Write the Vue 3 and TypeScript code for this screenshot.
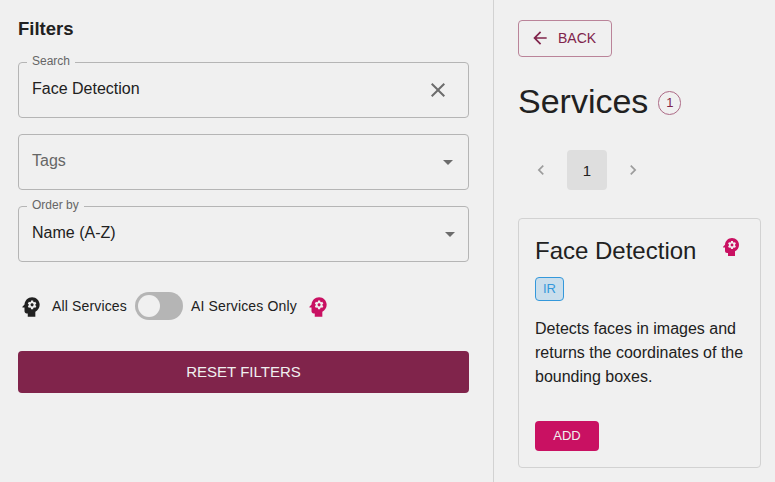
<script setup lang="ts">
import { ref, computed } from 'vue'

interface Service {
  name: string
  tag: string
  description: string
  ai: boolean
}

const search = ref('Face Detection')
const aiOnly = ref(false)
const services: Service[] = [
  {
    name: 'Face Detection',
    tag: 'IR',
    description: 'Detects faces in images and returns the coordinates of the bounding boxes.',
    ai: true,
  },
]
const shown = computed(() =>
  services.filter((s) => s.name.includes(search.value) && (!aiOnly.value || s.ai)),
)

function reset(): void {
  search.value = ''
  aiOnly.value = false
}
</script>

<template>
  <svg class="defs" aria-hidden="true">
    <symbol id="psychology" viewBox="0 0 24 24">
      <path d="M13 8.57c-.79 0-1.43.64-1.43 1.43s.64 1.43 1.43 1.43 1.43-.64 1.43-1.43-.64-1.43-1.43-1.43z" />
      <path d="M13 3C9.25 3 6.2 5.94 6.02 9.64L4.1 11.7c-.25.33-.01.8.4.8H6v3.5c0 1.1.9 2 2 2h1v3h7v-4.68c2.36-1.12 4-3.53 4-6.32 0-3.87-3.13-7-7-7zm3 7c0 .13-.01.26-.02.39l.83.66c.08.06.1.16.05.25l-.8 1.39c-.05.09-.16.12-.24.09l-.99-.4c-.21.16-.43.29-.67.39L14 13.83c-.01.1-.1.17-.2.17h-1.6c-.1 0-.18-.07-.2-.17l-.15-1.06c-.25-.1-.47-.23-.68-.39l-.99.4c-.09.03-.2 0-.25-.09l-.8-1.39c-.05-.08-.03-.19.05-.25l.84-.66c-.01-.13-.02-.26-.02-.39s.02-.27.04-.39l-.85-.66c-.08-.06-.1-.16-.05-.26l.8-1.38c.05-.09.15-.12.24-.09l1 .4c.2-.15.43-.29.67-.39l.15-1.06c.02-.1.1-.17.2-.17h1.6c.1 0 .18.07.2.17l.15 1.06c.24.1.46.23.67.39l1-.4c.09-.03.2 0 .24.09l.8 1.38c.05.09.03.2-.05.26l-.85.66c.03.12.04.25.04.39z" />
    </symbol>
  </svg>
  <div class="page">
    <aside class="filters">
      <h2 class="heading">Filters</h2>
      <div class="fields">
        <div class="field search">
          <label>Search</label>
          <span class="value">{{ search }}</span>
          <svg viewBox="0 0 24 24" @click="search = ''">
            <path d="M19 6.41 17.59 5 12 10.59 6.41 5 5 6.41 10.59 12 5 17.59 6.41 19 12 13.41 17.59 19 19 17.59 13.41 12z" />
          </svg>
        </div>
        <div class="field tags">
          <span class="value placeholder">Tags</span>
          <svg viewBox="0 0 24 24"><path d="M7 10l5 5 5-5z" /></svg>
        </div>
        <div class="field order">
          <label>Order by</label>
          <span class="value">Name (A-Z)</span>
          <svg viewBox="0 0 24 24"><path d="M7 10l5 5 5-5z" /></svg>
        </div>
      </div>
      <div class="toggle-row">
        <svg class="brain dark"><use href="#psychology" /></svg>
        <span class="all-label">All Services</span>
        <button class="switch" :class="{ on: aiOnly }" aria-label="AI Services Only" @click="aiOnly = !aiOnly">
          <span class="thumb"></span>
        </button>
        <span class="ai-label">AI Services Only</span>
        <svg class="brain"><use href="#psychology" /></svg>
      </div>
      <button class="reset" @click="reset">RESET FILTERS</button>
    </aside>
    <main class="results">
      <button class="back">
        <svg viewBox="0 0 24 24"><path d="M20 11H7.83l5.59-5.59L12 4l-8 8 8 8 1.41-1.41L7.83 13H20v-2z" /></svg>
        <span>BACK</span>
      </button>
      <div class="title">
        <h1>Services</h1>
        <span class="count">{{ shown.length }}</span>
      </div>
      <nav class="pagination">
        <svg viewBox="0 0 24 24"><path d="M15.41 7.41 14 6l-6 6 6 6 1.41-1.41L10.83 12z" /></svg>
        <span class="current">1</span>
        <svg viewBox="0 0 24 24"><path d="M10 6 8.59 7.41 13.17 12l-4.58 4.59L10 18l6-6z" /></svg>
      </nav>
      <article v-for="s in shown" :key="s.name" class="card">
        <header>
          <h3>{{ s.name }}</h3>
          <svg v-if="s.ai" class="brain small"><use href="#psychology" /></svg>
        </header>
        <span class="chip">{{ s.tag }}</span>
        <p>{{ s.description }}</p>
        <button class="add">ADD</button>
      </article>
    </main>
  </div>
</template>

<style>
body {
  background: #f0f0f0;
  overflow: hidden;
}
</style>

<style scoped>
.defs {
  position: absolute;
  width: 0;
  height: 0;
}
.page {
  box-sizing: border-box;
  display: flex;
  width: 775px;
  height: 482px;
  background: #f0f0f0;
  color: #212121;
  font-family: "Liberation Sans", Arial, sans-serif;
  font-size: 16px;
}
.page * {
  box-sizing: border-box;
}
h1, h2, h3, p {
  margin: 0;
  font-weight: 400;
}
button {
  margin: 0;
  padding: 0;
  border: 0;
  font-family: inherit;
}
svg {
  flex: none;
  fill: currentColor;
}
.filters {
  display: flex;
  flex-direction: column;
  width: 494px;
  padding: 17px 24px 0 18px;
  border-right: 1px solid #d2d2d2;
}
.heading {
  height: 24px;
  margin-bottom: 21px;
  font-size: 18.5px;
  font-weight: 700;
  line-height: 24px;
}
.fields {
  display: flex;
  flex-direction: column;
  gap: 16px;
}
.field {
  position: relative;
  display: flex;
  align-items: center;
  height: 56px;
  padding-left: 13px;
  border: 1px solid #b5b5b5;
  border-radius: 4px;
}
.field label {
  position: absolute;
  top: -10px;
  left: 8px;
  padding: 0 5px;
  background: #f0f0f0;
  color: #666;
  font-size: 12px;
  line-height: 16px;
}
.field svg {
  width: 24px;
  height: 24px;
  color: #6c6c6c;
}
.search {
  padding-right: 18px;
}
.tags {
  padding-right: 8px;
}
.order {
  padding-right: 6px;
}
.value {
  flex: 1;
  padding-bottom: 3px;
  line-height: 24px;
}
.placeholder {
  color: #666;
}
.toggle-row {
  display: flex;
  align-items: center;
  height: 28px;
  margin-top: 30px;
  font-size: 14px;
  letter-spacing: 0.15px;
}
.brain {
  width: 26px;
  height: 26px;
  color: #c91162;
}
.toggle-row .brain {
  margin-top: 2px;
}
.dark {
  color: #212121;
}
.all-label {
  width: 83px;
  margin-left: 8px;
  white-space: nowrap;
}
.switch {
  display: flex;
  align-items: center;
  width: 48px;
  height: 28px;
  padding: 0 3px;
  border-radius: 14px;
  background: #b5b5b5;
}
.switch.on {
  justify-content: flex-end;
}
.thumb {
  width: 22px;
  height: 22px;
  border-radius: 50%;
  background: #f0f0f0;
}
.ai-label {
  width: 114px;
  margin-left: 8px;
  white-space: nowrap;
}
.reset {
  width: 451px;
  height: 42px;
  margin-top: 31px;
  padding-bottom: 1px;
  border-radius: 4px;
  background: #80244b;
  color: #f0f0f0;
  font-size: 15px;
}
.results {
  display: flex;
  flex: 1;
  flex-direction: column;
  align-items: flex-start;
  padding: 20px 14px 0 24px;
}
.back {
  display: flex;
  align-items: center;
  gap: 8px;
  width: 94px;
  height: 37px;
  padding: 0 0 1px 11px;
  border: 1px solid #ba8499;
  border-radius: 4px;
  background: transparent;
  color: #80244b;
  font-size: 14px;
}
.back svg {
  width: 20px;
  height: 20px;
}
.title {
  display: flex;
  align-items: center;
  gap: 10px;
  height: 42px;
  margin-top: 24px;
}
.title h1 {
  padding-bottom: 2px;
  font-size: 34px;
  line-height: 40px;
}
.count {
  width: 23px;
  height: 24px;
  margin-top: 1px;
  border: 1px solid #ac6985;
  border-radius: 12px;
  color: #80244b;
  font-size: 13px;
  line-height: 22px;
  text-align: center;
}
.pagination {
  display: flex;
  align-items: center;
  gap: 16px;
  margin: 27px 0 28px 13px;
}
.pagination svg {
  width: 20px;
  height: 20px;
  color: #9c9c9c;
}
.current {
  width: 40px;
  height: 40px;
  border-radius: 4px;
  background: #dedede;
  font-size: 15px;
  line-height: 41px;
  text-align: center;
}
.card {
  display: flex;
  flex-direction: column;
  align-items: flex-start;
  width: 243px;
  height: 250px;
  padding: 16px;
  border: 1px solid #d2d2d2;
  border-radius: 4px;
}
.card header {
  display: flex;
  justify-content: space-between;
  width: 208px;
  height: 32px;
}
.card h3 {
  font-size: 24px;
  line-height: 32px;
  white-space: nowrap;
}
.small {
  width: 24px;
  height: 24px;
}
.chip {
  width: 29px;
  height: 24px;
  margin-top: 10px;
  border: 1px solid #3498db;
  border-radius: 4px;
  background: #cadeec;
  color: #3498db;
  font-size: 13px;
  line-height: 22px;
  text-align: center;
}
.card p {
  width: 211px;
  margin-top: 16px;
  font-size: 16px;
  line-height: 24px;
}
.add {
  width: 64px;
  height: 30px;
  margin-top: 32px;
  padding-bottom: 1px;
  border-radius: 4px;
  background: #c91162;
  color: #f0f0f0;
  font-size: 13px;
}
</style>
